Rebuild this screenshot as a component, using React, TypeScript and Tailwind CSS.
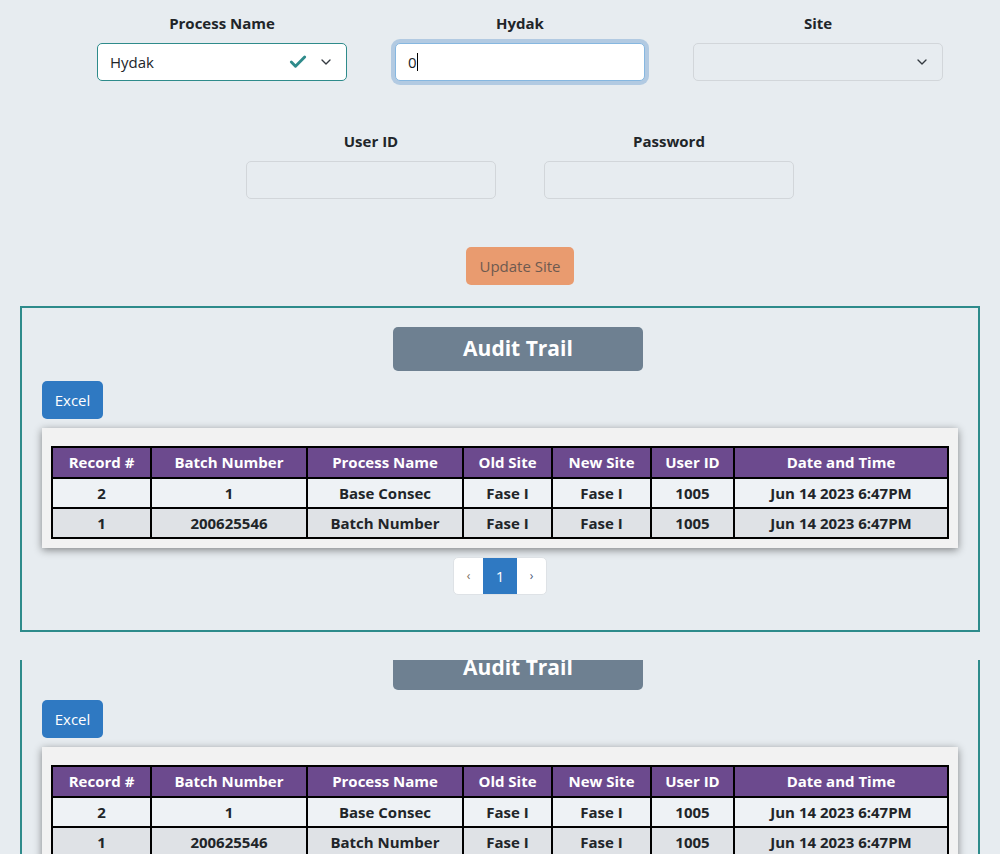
import { Check, ChevronDown } from "lucide-react";

const rows = [
  { rec: "2", batch: "1", proc: "Base Consec", oldSite: "Fase I", newSite: "Fase I", user: "1005", date: "Jun 14 2023 6:47PM" },
  { rec: "1", batch: "200625546", proc: "Batch Number", oldSite: "Fase I", newSite: "Fase I", user: "1005", date: "Jun 14 2023 6:47PM" },
];

const Field = ({ label, children }: { label: string; children: React.ReactNode }) => (
  <div className="flex w-[250px] flex-col items-center">
    <label className="mb-[10px] h-[20px] text-[15px] font-bold leading-[20px] text-[#212529]">{label}</label>
    {children}
  </div>
);

const AuditTrail = () => (
  <div className="flex flex-col px-[20px] pt-[19px]">
    <div className="flex justify-center pl-[36px]">
      <div className="flex h-[44px] w-[250px] items-center justify-center rounded-[5px] bg-[#6e8091] text-[21px] font-bold text-white">
        Audit Trail
      </div>
    </div>
    <button className="mt-[10px] h-[38px] w-[61px] rounded-[5px] bg-[#2f79c2] text-[15px] text-white">
      Excel
    </button>
    <div className="mt-[9px] bg-[#f2f2f2] px-[9px] pb-[9px] pt-[18px] shadow-[0_2px_8px_rgba(0,0,0,0.45)]">
      <table className="w-full border-collapse border-2 border-black text-center text-[15px] font-bold">
        <thead>
          <tr className="h-[31px] bg-[#6c4a8e] text-white">
            <th className="w-[99px] border-2 border-black">Record #</th>
            <th className="w-[156px] border-2 border-black">Batch Number</th>
            <th className="w-[156px] border-2 border-black">Process Name</th>
            <th className="w-[89px] border-2 border-black">Old Site</th>
            <th className="w-[99px] border-2 border-black">New Site</th>
            <th className="w-[83px] border-2 border-black">User ID</th>
            <th className="border-2 border-black">Date and Time</th>
          </tr>
        </thead>
        <tbody className="text-[#212529]">
          {rows.map((r, i) => (
            <tr key={i} className={i % 2 === 0 ? "h-[30px] bg-[#eef2f5]" : "h-[30px] bg-[#dfe2e6]"}>
              <td className="border-2 border-black">{r.rec}</td>
              <td className="border-2 border-black">{r.batch}</td>
              <td className="border-2 border-black">{r.proc}</td>
              <td className="border-2 border-black">{r.oldSite}</td>
              <td className="border-2 border-black">{r.newSite}</td>
              <td className="border-2 border-black">{r.user}</td>
              <td className="border-2 border-black">{r.date}</td>
            </tr>
          ))}
        </tbody>
      </table>
    </div>
    <div className="mt-[9px] flex justify-center">
      <div className="flex h-[38px] overflow-hidden rounded-[5px] border border-[#dee2e6] bg-white text-[15px]">
        <span className="flex w-[29px] items-center justify-center text-[12px] text-[#7a6a5a]">‹</span>
        <span className="flex w-[34px] items-center justify-center bg-[#2f79c2] text-white">1</span>
        <span className="flex w-[29px] items-center justify-center text-[12px] text-[#4a5a7a]">›</span>
      </div>
    </div>
  </div>
);

export default function App() {
  return (
    <div
      className="min-h-[854px] overflow-hidden bg-[#e7ecf0] text-[#212529]"
      style={{ fontFamily: '"Open Sans", "Noto Sans", sans-serif' }}
    >
      <div className="flex justify-center gap-[48px] pl-[40px] pt-[13px]">
        <Field label="Process Name">
          <div className="flex h-[38px] w-full items-center rounded-[5px] border border-[#2e8b8b] bg-white pl-[12px] pr-[12px] text-[15px]">
            <span className="flex-1">Hydak</span>
            <Check className="mr-[10px] h-[20px] w-[20px] text-[#2e8b8b]" strokeWidth={3.5} />
            <ChevronDown className="h-[16px] w-[16px] text-[#343a40]" strokeWidth={2} />
          </div>
        </Field>
        <Field label="Hydak">
          <div className="flex h-[38px] w-full items-center rounded-[5px] border border-[#86b7e0] bg-white pl-[12px] text-[15px] shadow-[0_0_0_4px_rgba(80,140,200,0.35)]">
            <span>0</span>
            <span className="h-[18px] w-px bg-black" />
          </div>
        </Field>
        <Field label="Site">
          <div className="flex h-[38px] w-full items-center justify-end rounded-[5px] border border-[#d2d6da] bg-[#e7ecf0] pr-[12px]">
            <ChevronDown className="h-[16px] w-[16px] text-[#343a40]" strokeWidth={2} />
          </div>
        </Field>
      </div>

      <div className="mt-[50px] flex justify-center gap-[48px] pl-[40px]">
        <Field label="User ID">
          <div className="h-[38px] w-full rounded-[5px] border border-[#d2d6da] bg-[#e7ecf0]" />
        </Field>
        <Field label="Password">
          <div className="h-[38px] w-full rounded-[5px] border border-[#d2d6da] bg-[#e7ecf0]" />
        </Field>
      </div>

      <div className="mt-[48px] flex justify-center pl-[40px]">
        <button className="h-[38px] w-[108px] rounded-[5px] bg-[#e99b6f] text-[15px] text-[#6e5a50]">
          Update Site
        </button>
      </div>

      <div className="mx-[20px] mt-[21px] h-[326px] border-2 border-[#2e8b8b]">
        <AuditTrail />
      </div>

      <div className="mx-[20px] mt-[28px] h-[200px] overflow-hidden border-x-2 border-[#2e8b8b]">
        <div className="mt-[-33px]">
          <AuditTrail />
        </div>
      </div>
    </div>
  );
}
